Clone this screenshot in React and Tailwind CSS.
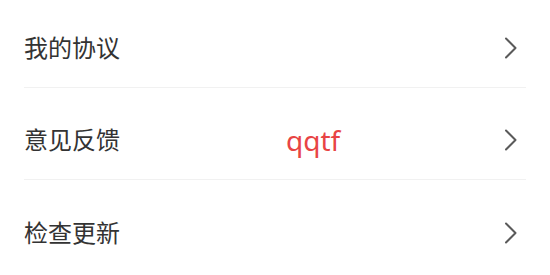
import React from "react";

const items = [
  { label: "我的协议" },
  { label: "意见反馈", tag: "qqtf" },
  { label: "检查更新" },
];

const Chevron = () => (
  <svg width="14" height="22" viewBox="0 0 14 22" fill="none" className="mr-[8px]">
    <path d="M2 1.5 L11.5 11 L2 20.5" stroke="#5a5a5a" strokeWidth="2" strokeLinecap="round" strokeLinejoin="round" />
  </svg>
);

export default function App() {
  return (
    <div className="w-[550px] h-[275px] bg-white overflow-hidden" style={{ fontFamily: '"Noto Sans", "Noto Sans CJK SC", sans-serif' }}>
      <div className="mx-6">
        {items.map((item) => (
          <div
            key={item.label}
            className="flex items-center justify-between h-[92px] pt-[13px] border-b border-[#f1f1f1] first:h-[88px] first:pt-[9px] last:border-b-0"
          >
            <div className="flex items-center">
              <span className="w-[262px] text-[24px] leading-none text-[#333333]">{item.label}</span>
              {item.tag && (
                <span className="text-[28px] leading-none text-[#e84444]">{item.tag}</span>
              )}
            </div>
            <Chevron />
          </div>
        ))}
      </div>
    </div>
  );
}
